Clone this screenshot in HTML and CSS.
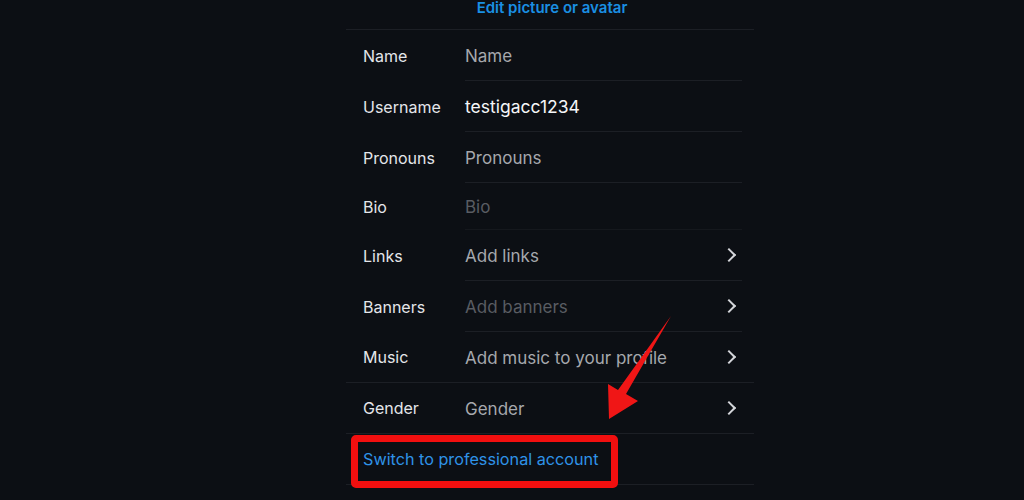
FILE: index.html
```html
<!DOCTYPE html>
<html lang="en">
<head>
    <meta charset="UTF-8">
    <meta name="viewport" content="width=device-width, initial-scale=1.0">
    <title>Edit profile</title>
    <link rel="stylesheet" href="styles.css">
</head>
<body>
    <div class="panel">
        <div class="avatar-link">Edit picture or avatar</div>

        <div class="row">
            <div class="label">Name</div>
            <div class="value placeholder">Name</div>
        </div>
        <div class="row">
            <div class="label">Username</div>
            <div class="value filled">testigacc1234</div>
        </div>
        <div class="row">
            <div class="label">Pronouns</div>
            <div class="value placeholder">Pronouns</div>
        </div>
        <div class="row row-short">
            <div class="label">Bio</div>
            <div class="value faint faint-line">Bio</div>
        </div>
        <div class="row">
            <div class="label">Links</div>
            <div class="value placeholder">Add links <span class="chevron"></span></div>
        </div>
        <div class="row">
            <div class="label">Banners</div>
            <div class="value faint">Add banners <span class="chevron"></span></div>
        </div>
        <div class="row row-full">
            <div class="label">Music</div>
            <div class="value placeholder">Add music to your profile <span class="chevron"></span></div>
        </div>
        <div class="row row-full">
            <div class="label">Gender</div>
            <div class="value placeholder">Gender <span class="chevron"></span></div>
        </div>
        <div class="row row-full switch-row">
            <div class="switch-link">Switch to professional account</div>
            <div class="highlight"></div>
        </div>

        <svg class="arrow" width="80" height="110" viewBox="0 0 80 110">
            <polygon points="72,1 27,79 39,86 10,104 9,69 19,75" fill="#f01616"/>
        </svg>
    </div>
</body>
</html>
```

FILE: styles.css
```css
body {
    margin: 0;
    background-color: #0c0f14;
    font-family: Inter, "Noto Sans", sans-serif;
    height: 500px;
    overflow: hidden;
}

.panel {
    position: relative;
    width: 408px;
    margin-left: 346px;
}

.avatar-link {
    height: 30px;
    border-bottom: 1px solid #1c1f25;
    text-align: center;
    color: #1a8fe3;
    font-size: 15px;
    font-weight: 600;
    line-height: 16px;
    padding-left: 4px;
    box-sizing: border-box;
}

.row {
    display: flex;
    height: 51px;
}

.row-short {
    height: 47px;
}

.row-full {
    border-bottom: 1px solid #1c1f25;
    height: 50px;
}

.label {
    width: 119px;
    flex-shrink: 0;
    padding-left: 17px;
    box-sizing: border-box;
    color: #e4e6ea;
    font-size: 16px;
    display: flex;
    align-items: center;
}

.value {
    flex: 1;
    margin-right: 12px;
    padding-top: 1px;
    display: flex;
    align-items: center;
    font-size: 17px;
    border-bottom: 1px solid #1c1f25;
    position: relative;
}

.row-full .value {
    border-bottom: none;
}

.faint-line {
    border-bottom-color: #15181d;
}

.placeholder {
    color: #a6a8ad;
}

.filled {
    color: #f5f6f8;
    font-size: 17.5px;
}

.faint {
    color: #595c62;
}

.chevron {
    position: absolute;
    right: 8px;
    top: 50%;
    width: 8px;
    height: 8px;
    margin-top: -5px;
    border-top: 2px solid #d4d6da;
    border-right: 2px solid #d4d6da;
    transform: rotate(45deg);
}

.switch-row {
    position: relative;
}

.switch-link {
    padding-left: 17px;
    display: flex;
    align-items: center;
    color: #2f93e8;
    font-size: 16.2px;
}

.highlight {
    position: absolute;
    left: 5px;
    top: 1px;
    width: 267px;
    height: 53px;
    box-sizing: border-box;
    border: 7px solid #f20f0f;
    border-radius: 5px;
}

.arrow {
    position: absolute;
    left: 253px;
    top: 315px;
}
```
